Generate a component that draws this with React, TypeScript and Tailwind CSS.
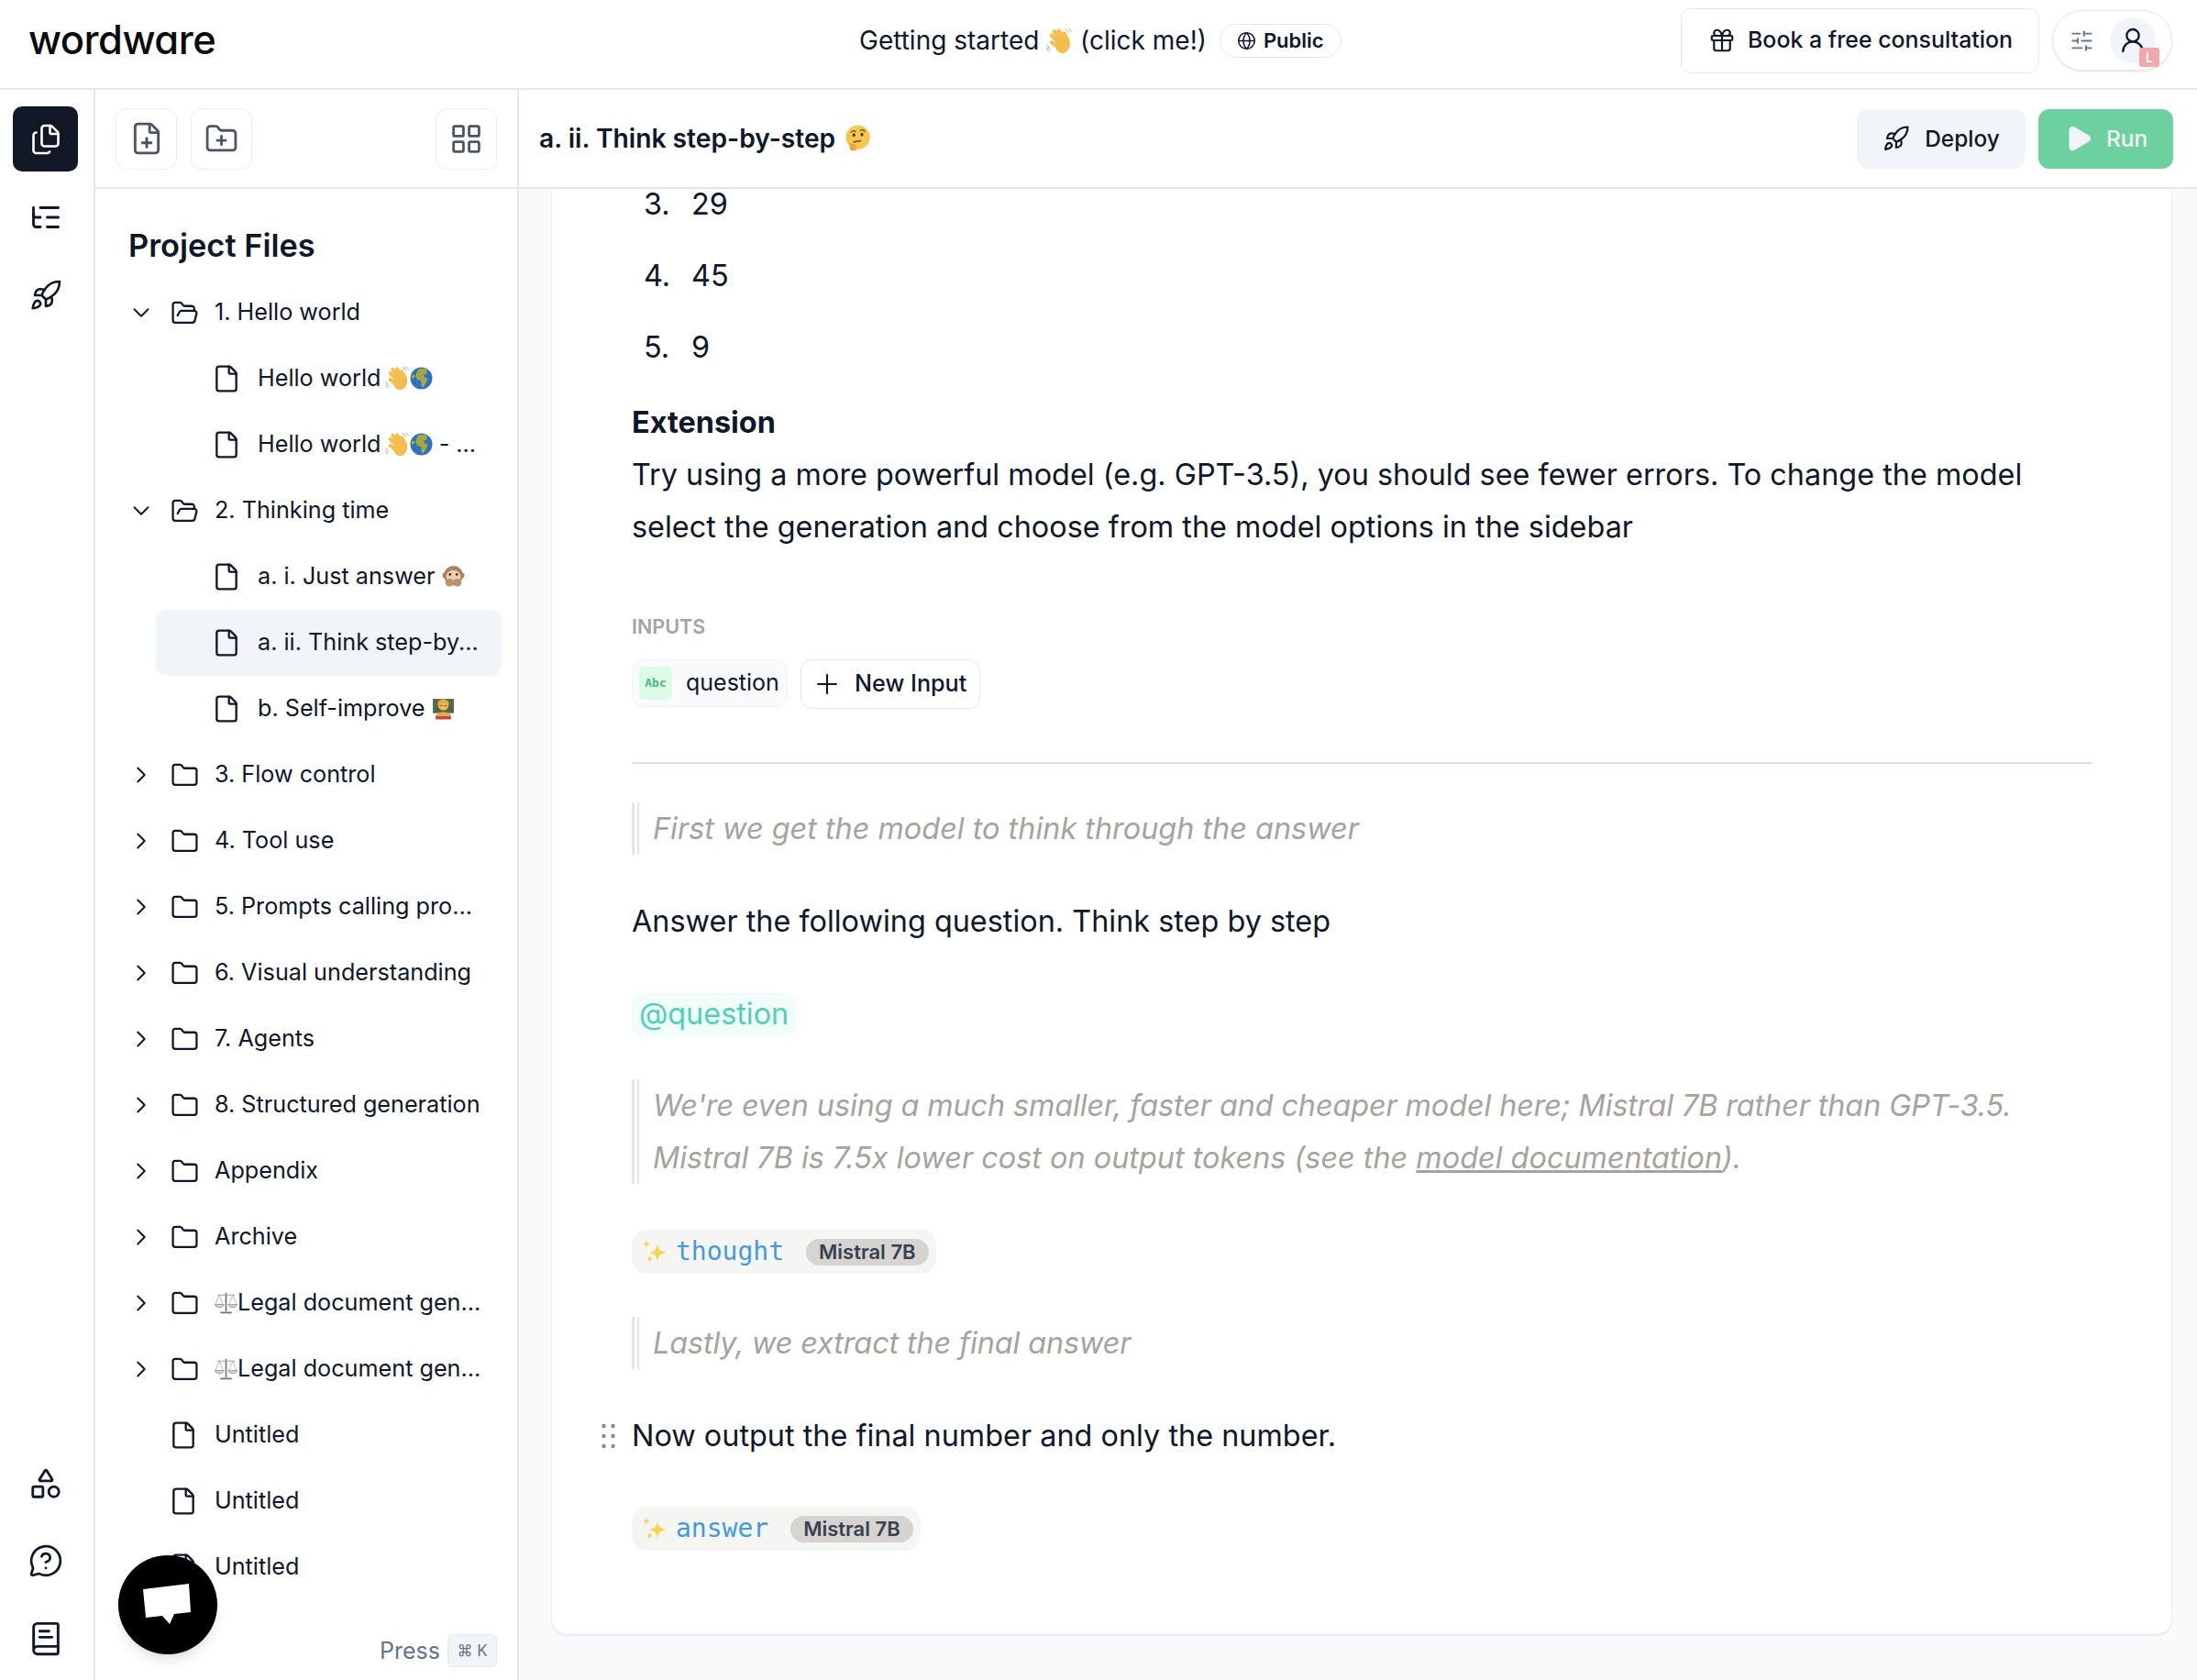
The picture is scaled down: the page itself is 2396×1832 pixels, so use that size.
import React from 'react';
import {
  BookText,
  ChevronDown,
  ChevronRight,
  File,
  FilePlus,
  Files,
  Folder,
  FolderOpen,
  FolderPlus,
  Gift,
  Globe,
  LayoutGrid,
  ListTree,
  MessageCircleQuestion,
  Play,
  Plus,
  Rocket,
  Shapes,
  SlidersHorizontal,
  UserRound,
} from 'lucide-react';

type EmojiProps = { className?: string };

const Wave: React.FC<EmojiProps> = ({ className }) => (
  <svg viewBox="0 0 24 24" className={className}>
    <g stroke="#f5bd4f" strokeWidth="3.6" strokeLinecap="round">
      <path d="M11 13 L5 7" />
      <path d="M13 11 L7.5 3.5" />
      <path d="M16 10 L11.5 3" />
      <path d="M19 11 L16 5.5" />
      <path d="M10 17 L5 13.5" />
    </g>
    <path d="M8 11 L20.5 9.5 C22.5 15 21.5 21 16 23 C11.5 24 8.5 20.5 8 17 Z" fill="#f5bd4f" />
    <path d="M1 15.5 L3.5 20 M0 18 L2.5 22 M17 1 L20.5 4.5 M20 0.5 L23 4" stroke="#a3a3a3" strokeWidth="0.8" />
  </svg>
);

const Earth: React.FC<EmojiProps> = ({ className }) => (
  <svg viewBox="0 0 24 24" className={className}>
    <circle cx="12" cy="12" r="11.5" fill="#2f6fc4" />
    <path d="M9 2.5 C12 1.2 16 1.5 18.5 3.5 L17 8 L14.5 8 L15.5 11 L19 12 L17.5 16 L14 21.5 L12 20 L12 15 L8 13.5 L6 10.5 L7 6 Z" fill="#a3a83f" />
    <path d="M1.5 9 L5 8 L5 11 L2.5 13 Z" fill="#a3a83f" />
  </svg>
);

const Monkey: React.FC<EmojiProps> = ({ className }) => (
  <svg viewBox="0 0 24 24" className={className}>
    <circle cx="3.5" cy="11" r="3" fill="#a9845f" />
    <circle cx="20.5" cy="11" r="3" fill="#a9845f" />
    <circle cx="12" cy="11" r="10" fill="#a9845f" />
    <ellipse cx="12" cy="12.5" rx="7.5" ry="7" fill="#ecd3ae" />
    <circle cx="8.5" cy="10" r="1.3" fill="#3b2a1c" />
    <circle cx="15.5" cy="10" r="1.3" fill="#3b2a1c" />
    <ellipse cx="8" cy="18.5" rx="4.5" ry="4" fill="#b8926a" />
    <ellipse cx="16" cy="18.5" rx="4.5" ry="4" fill="#b8926a" />
  </svg>
);

const Teacher: React.FC<EmojiProps> = ({ className }) => (
  <svg viewBox="0 0 24 24" className={className}>
    <rect x="1" y="2" width="22" height="15" fill="#55684f" />
    <circle cx="12" cy="8.5" r="5.5" fill="#f5bd4f" />
    <path d="M6 8 C6 0.5 18 0.5 18 8 C14 5.5 10 5.5 6 8 Z" fill="#e8a93c" />
    <path d="M8 9 H11 M13 9 H16" stroke="#6b4a1c" strokeWidth="0.9" />
    <path d="M4 20 C4 14.5 20 14.5 20 20 Z" fill="#e8a93c" />
    <rect x="4" y="20" width="16" height="3.5" fill="#c9473c" />
  </svg>
);

const Thinking: React.FC<EmojiProps> = ({ className }) => (
  <svg viewBox="0 0 24 24" className={className}>
    <circle cx="12.5" cy="11" r="10.5" fill="#f7c64f" />
    <path d="M6.5 6.5 C8 5 9.5 5 10.5 6 M14.5 5 C16 4 18 4.5 18.5 6" stroke="#6b4a1c" strokeWidth="1" fill="none" strokeLinecap="round" />
    <ellipse cx="9" cy="9" rx="1.2" ry="1.6" fill="#4a3416" />
    <ellipse cx="16" cy="8.5" rx="1.2" ry="1.6" fill="#4a3416" />
    <path d="M9 15 L15 14" stroke="#6b4a1c" strokeWidth="1.1" strokeLinecap="round" />
    <path d="M5 16 L11 17 L11 22 C9 23.5 6 23 5.5 21 Z" fill="#eea63a" />
  </svg>
);

const Scales: React.FC<EmojiProps> = ({ className }) => (
  <svg viewBox="0 0 24 24" className={className} fill="none" stroke="#9ca3af" strokeWidth="1">
    <path d="M12 2 V21 M6 22.5 H18" strokeWidth="1.6" stroke="#6b7280" />
    <path d="M3 4 H21" />
    <path d="M5 4 L1 14 M5 4 L9 14 M19 4 L15 14 M19 4 L23 14" strokeWidth="0.7" />
    <path d="M0.5 14 C2 18 8 18 9.5 14 Z M14.5 14 C16 18 22 18 23.5 14 Z" fill="#d1d5db" />
  </svg>
);

const Sparkles: React.FC<EmojiProps> = ({ className }) => (
  <svg viewBox="0 0 26 26" className={className}>
    <path d="M16 4 C16.8 11 18.5 12.5 26 14 C18.5 15.5 16.8 17 16 25 C15.2 17 13.5 15.5 6.5 14 C13.5 12.5 15.2 11 16 4 Z" fill="#fcd34d" />
    <path d="M4 0 C4.4 3 5 4 8 4.8 C5 5.5 4.4 6.5 4 10 C3.6 6.5 3 5.5 0 4.8 C3 4 3.6 3 4 0 Z" fill="#fcd34d" />
    <path d="M7.5 17 C7.8 19 8.5 20 11 20.8 C8.5 21.5 7.8 22.5 7.5 26 C7.2 22.5 6.5 21.5 4 20.8 C6.5 20 7.2 19 7.5 17 Z" fill="#fcd34d" />
  </svg>
);

type Row = {
  label: React.ReactNode;
  kind: 'open' | 'closed' | 'file' | 'nested';
  active?: boolean;
};

const emoji = 'inline-block w-[25px] h-[25px] align-[-4px]';
const waveEmoji = 'inline-block w-[27px] h-[27px] align-[-5px] -ml-[3px]';

const rows: Row[] = [
  { kind: 'open', label: '1. Hello world' },
  { kind: 'nested', label: <>Hello world <Wave className={waveEmoji} /><Earth className={emoji} /></> },
  { kind: 'nested', label: <>Hello world <Wave className={waveEmoji} /><Earth className={emoji} /> - ...</> },
  { kind: 'open', label: '2. Thinking time' },
  { kind: 'nested', label: <>a. i. Just answer <Monkey className={emoji} /></> },
  { kind: 'nested', label: 'a. ii. Think step-by...', active: true },
  { kind: 'nested', label: <>b. Self-improve <Teacher className={emoji} /></> },
  { kind: 'closed', label: '3. Flow control' },
  { kind: 'closed', label: '4. Tool use' },
  { kind: 'closed', label: '5. Prompts calling pro...' },
  { kind: 'closed', label: '6. Visual understanding' },
  { kind: 'closed', label: '7. Agents' },
  { kind: 'closed', label: '8. Structured generation' },
  { kind: 'closed', label: 'Appendix' },
  { kind: 'closed', label: 'Archive' },
  { kind: 'closed', label: <><Scales className={emoji} />Legal document gen...</> },
  { kind: 'closed', label: <><Scales className={emoji} />Legal document gen...</> },
  { kind: 'file', label: 'Untitled' },
  { kind: 'file', label: 'Untitled' },
  { kind: 'file', label: 'Untitled' },
];

const TreeRow: React.FC<{ row: Row }> = ({ row }) => {
  const { kind, label, active } = row;
  return (
    <div
      className={`flex items-center h-[72px] text-[25.2px] text-[#0f172a] whitespace-nowrap rounded-xl ${
        kind === 'nested' ? 'ml-[30px] pl-[61px] mr-[17px]' : 'ml-[-1px]'
      } ${active ? 'bg-[#f1f5f9]' : ''}`}
    >
      {kind === 'open' && <ChevronDown className="w-[30px] h-[30px] mr-[17px]" strokeWidth={1.5} />}
      {kind === 'closed' && <ChevronRight className="w-[30px] h-[30px] mr-[17px]" strokeWidth={1.5} />}
      {kind === 'file' && <div className="w-[45px]" />}
      {kind === 'open' && <FolderOpen className="w-[31px] h-[31px] mr-[17px]" strokeWidth={1.75} />}
      {kind === 'closed' && <Folder className="w-[31px] h-[31px] mr-[17px]" strokeWidth={1.75} />}
      {kind === 'file' && <File className="w-[32px] h-[32px] mr-[18px]" strokeWidth={1.75} />}
      {kind === 'nested' && <File className="w-[32px] h-[32px] mr-[18px]" strokeWidth={1.75} />}
      <span>{label}</span>
    </div>
  );
};

const ToolButton: React.FC<{ children: React.ReactNode }> = ({ children }) => (
  <button className="flex items-center justify-center w-[67px] h-[67px] rounded-xl border border-[#e9edf3] text-[#4b5563]">
    {children}
  </button>
);

const Quote: React.FC<{ children: React.ReactNode; className?: string }> = ({ children, className }) => (
  <div className={`border-l-[3px] border-[#e7e5e4] pl-[3px] ${className ?? ''}`}>
    <div className="border-l-[2px] border-[#e7e5e4] pl-[15px] italic text-[#a8a29e] text-[32.4px] leading-[57px]">
      {children}
    </div>
  </div>
);

const Generation: React.FC<{ name: string; className?: string }> = ({ name, className }) => (
  <div className={`flex items-center h-[48px] w-fit rounded-[16px] bg-[#f5f5f4] pl-[12px] pr-[8px] ${className ?? ''}`}>
    <Sparkles className="w-[26px] h-[26px] mr-[10px]" />
    <span className="font-['DejaVu_Sans_Mono',monospace] text-[28px] text-[#4299e1] mr-[24px]">{name}</span>
    <span className="flex items-center h-[29px] px-[14px] rounded-full bg-[#d6d3d1] text-[22px] font-semibold text-[#374151]">
      Mistral 7B
    </span>
  </div>
);

const App: React.FC = () => {
  return (
    <div className="w-[2396px] h-[1832px] flex flex-col overflow-hidden bg-white text-[#0f172a] font-['Inter',sans-serif]">
      {/* Top bar */}
      <header className="relative flex items-center justify-between h-[98px] shrink-0 border-b-2 border-[#e5e7eb] pl-[31px] pr-[27px] pb-[8px]">
        <div className="text-[43.5px] leading-none font-medium tracking-[-0.5px] text-[#0a0a0a] [font-feature-settings:'cv11']">wordware</div>
        <div className="absolute left-[937px] top-[23px] flex items-center">
          <span className="flex items-center text-[28px] text-[#0f172a] whitespace-nowrap">
            Getting started&nbsp;<Wave className="w-[29px] h-[29px]" />&nbsp;(click me!)
          </span>
          <span className="flex items-center ml-[14px] h-[37px] px-[18px] rounded-full border border-[#e2e8f0] text-[22px] font-semibold">
            <Globe className="w-[21px] h-[21px] mr-[8px]" strokeWidth={1.75} />
            Public
          </span>
        </div>
        <div className="flex items-center">
          <button className="flex items-center h-[71px] w-[391px] pl-[29px] rounded-xl border border-[#e5e7eb] text-[24.9px] font-medium whitespace-nowrap">
            <Gift className="w-[30px] h-[30px] mr-[13px]" strokeWidth={1.75} />
            Book a free consultation
          </button>
          <div className="relative flex items-center ml-[14px] w-[131px] h-[66px] rounded-full border border-[#e5e7eb] shadow-sm">
            <SlidersHorizontal className="ml-[18px] w-[27px] h-[27px] text-[#64748b]" strokeWidth={1.75} />
            <div className="flex items-center justify-center ml-[17px] w-[50px] h-[50px] rounded-full bg-[#f1f5f9]">
              <UserRound className="w-[32px] h-[32px]" strokeWidth={1.75} />
            </div>
            <span className="absolute left-[94px] top-[40px] flex items-center justify-center w-[22px] h-[21px] rounded-[3px] bg-[#f2a8a8] text-[14px] font-semibold text-white">
              L
            </span>
          </div>
        </div>
      </header>

      <div className="flex flex-1 min-h-0">
        {/* Icon rail */}
        <nav className="flex flex-col items-center justify-between w-[104px] shrink-0 border-r-2 border-[#e5e7eb] pt-[18px] pb-[25px] pr-[3px]">
          <div className="flex flex-col items-center">
            <div className="flex items-center justify-center w-[71px] h-[71px] rounded-[10px] bg-[#111827] text-white">
              <Files className="w-[36px] h-[36px]" strokeWidth={1.75} />
            </div>
            <ListTree className="w-[36px] h-[36px] mt-[32px]" strokeWidth={1.9} />
            <Rocket className="w-[36px] h-[36px] mt-[49px]" strokeWidth={1.75} />
          </div>
          <div className="flex flex-col items-center gap-[46px]">
            <Shapes className="w-[38px] h-[38px]" strokeWidth={1.75} />
            <MessageCircleQuestion className="w-[38px] h-[38px]" strokeWidth={1.7} />
            <BookText className="w-[40px] h-[40px]" strokeWidth={1.75} />
          </div>
        </nav>

        {/* Project files */}
        <aside className="relative flex flex-col w-[462px] shrink-0 border-r-2 border-[#e5e7eb]">
          <div className="flex items-center h-[108px] shrink-0 border-b-2 border-[#e5e7eb] pl-[22px] pr-[22px]">
            <ToolButton><FilePlus className="w-[38px] h-[38px]" strokeWidth={1.8} /></ToolButton>
            <div className="ml-[15px]"><ToolButton><FolderPlus className="w-[37px] h-[37px]" strokeWidth={1.8} /></ToolButton></div>
            <div className="ml-auto"><ToolButton><LayoutGrid className="w-[37px] h-[37px]" strokeWidth={1.8} /></ToolButton></div>
          </div>
          <div className="flex-1 min-h-0 overflow-hidden pl-[36px]">
            <h2 className="text-[34.4px] font-semibold leading-[44px] mt-[40px] mb-[15px]">Project Files</h2>
            {rows.map((row, i) => (
              <TreeRow key={i} row={row} />
            ))}
          </div>
          <div className="absolute right-[22px] bottom-[13px] flex items-center bg-white text-[25px] text-[#64748b]">
            Press
            <span className="flex items-center justify-center ml-[8px] w-[54px] h-[36px] rounded-md border border-[#e2e8f0] bg-[#f1f5f9] text-[17px]">
              ⌘ K
            </span>
          </div>
          <div className="absolute left-[25px] bottom-[28px] flex items-center justify-center w-[108px] h-[108px] rounded-full bg-black shadow-lg">
            <svg viewBox="0 0 54 46" className="w-[54px] h-[46px]">
              <path d="M0 6 L50 0 L52 31 L34 33 L29 44 L21 35 L3 37 Z" fill="#fff" />
            </svg>
          </div>
        </aside>

        {/* Editor */}
        <main className="flex flex-col flex-1 min-w-0 bg-[#f8fafc]">
          <div className="flex items-center justify-between h-[108px] shrink-0 bg-white border-b-2 border-[#e5e7eb] pl-[22px] pr-[26px]">
            <div className="flex items-center text-[28.2px] font-semibold">
              a. ii. Think step-by-step
              <Thinking className="ml-[9px] w-[30px] h-[30px]" />
            </div>
            <div className="flex items-center gap-[14px]">
              <button className="flex items-center justify-center w-[184px] h-[65px] rounded-xl bg-[#f1f5f9] text-[24.4px] font-medium">
                <Rocket className="w-[30px] h-[30px] mr-[16px]" strokeWidth={1.75} />
                Deploy
              </button>
              <button className="flex items-center justify-center w-[147px] h-[65px] rounded-xl bg-[#6dd09f] text-[24.4px] font-medium text-[#f1f5f9]">
                <Play className="w-[32px] h-[32px] mr-[14px] fill-[#f1f5f9]" strokeWidth={1.75} />
                Run
              </button>
            </div>
          </div>

          <div className="flex-1 min-h-0 pl-[36px] pr-[28px] pb-[50px]">
            <div className="h-full overflow-hidden bg-white rounded-b-2xl shadow-[0_1px_3px_rgba(0,0,0,0.12)] pl-[87px] pr-[86px] text-[32.4px] text-[#0f172a]">
              <div className="-mt-[22px]">
                {[['3.', '29'], ['4.', '45'], ['5.', '9']].map(([n, v]) => (
                  <div key={n} className="flex items-center h-[78px] pl-[13px]">
                    <span className="w-[52px]">{n}</span>
                    <span>{v}</span>
                  </div>
                ))}
                <div className="mt-[14px] font-bold leading-[57px]">Extension</div>
                <p className="leading-[57px]">
                  Try using a more powerful model (e.g. GPT-3.5), you should see fewer errors. To change the model select the generation and choose from the model options in the sidebar
                </p>

                <div className="mt-[65px] h-[30px] text-[21.5px] font-semibold leading-[30px] text-[#a8a29e]">INPUTS</div>
                <div className="flex items-start mt-[21px] gap-[14px]">
                  <div className="flex items-center h-[52px] w-[170px] rounded-xl border border-[#f1f5f9] bg-[#f8fafc] pl-[7px] text-[25px]">
                    <span className="flex items-center justify-center w-[36px] h-[36px] rounded-md bg-[#dcfce7] font-['DejaVu_Sans_Mono',monospace] text-[13px] font-bold text-[#4ab97e]">Abc</span>
                    <span className="ml-[15px]">question</span>
                  </div>
                  <button className="flex items-center h-[54px] w-[196px] pl-[11px] rounded-xl border border-[#e2e8f0] text-[25.2px] font-medium">
                    <Plus className="w-[34px] h-[34px] mr-[13px]" strokeWidth={1.5} />
                    New Input
                  </button>
                </div>

                <hr className="mt-[58px] border-t-2 border-[#e0e0e0]" />

                <Quote className="mt-[42px]">First we get the model to think through the answer</Quote>
                <p className="mt-[44px] leading-[57px]">Answer the following question. Think step by step</p>
                <div className="mt-[44px] leading-[57px]">
                  <span className="inline-block leading-[46px] px-[8px] rounded-xl bg-[#f0fdf9] text-[#4fd1b5]">@question</span>
                </div>
                <Quote className="mt-[43px]">
                  <span className="tracking-[-0.11px]">We're even using a much smaller, faster and cheaper model here; Mistral 7B rather than GPT-3.5.</span> Mistral 7B is 7.5x lower cost on output tokens (see the <span className="underline">model documentation</span>).
                </Quote>
                <Generation name="thought" className="mt-[50px]" />
                <Quote className="mt-[47px]"><span className="tracking-[-0.13px]">Lastly, we extract the final answer</span></Quote>
                <div className="relative mt-[44px] leading-[57px]">
                  <svg viewBox="0 0 15 28" className="absolute left-[-33px] top-[15px] w-[15px] h-[28px]" fill="#8a8a8a">
                    <circle cx="2.5" cy="3" r="2.2" /><circle cx="12.5" cy="3" r="2.2" />
                    <circle cx="2.5" cy="14" r="2.2" /><circle cx="12.5" cy="14" r="2.2" />
                    <circle cx="2.5" cy="25" r="2.2" /><circle cx="12.5" cy="25" r="2.2" />
                  </svg>
                  Now output the final number and only the number.
                </div>
                <Generation name="answer" className="mt-[49px]" />
              </div>
            </div>
          </div>
        </main>
      </div>
    </div>
  );
};

export default App;
